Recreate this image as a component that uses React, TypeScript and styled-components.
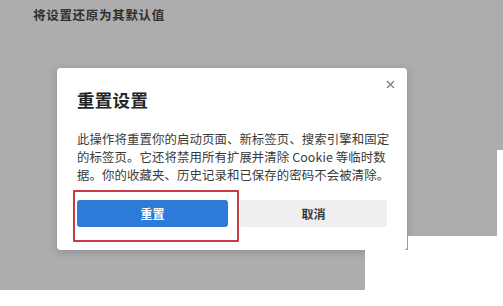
import React from "react";
import styled, { createGlobalStyle } from "styled-components";

const Global = createGlobalStyle`
  html, body { margin: 0; padding: 0; background: #ffffff; }
  body { width: 503px; height: 306px; overflow: hidden; font-family: "Noto Sans CJK SC", "Noto Sans", sans-serif; }
`;

const Page = styled.div`
  position: relative;
  width: 503px;
  height: 306px;
`;

const Backdrop = styled.div`
  width: 503px;
  height: 290px;
  background: #adadad;
  padding: 7px 0 0 0;
  box-sizing: border-box;
  display: flex;
  flex-direction: column;
`;

const Heading = styled.div`
  margin-left: 33px;
  font-size: 12.5px;
  line-height: 16px;
  font-weight: 700;
  color: #2f2f2f;
  letter-spacing: 0.7px;
`;

const Dialog = styled.div`
  position: relative;
  margin: 45px 0 0 57px;
  width: 350px;
  height: 182px;
  box-sizing: border-box;
  background: #ffffff;
  border-radius: 4px;
  box-shadow: 0 2px 8px rgba(0, 0, 0, 0.18);
  padding: 20px 20px 0 20px;
  display: flex;
  flex-direction: column;
`;

const Title = styled.div`
  font-size: 17.5px;
  line-height: 24px;
  font-weight: 700;
  color: #242424;
  letter-spacing: 0.3px;
`;

const Body = styled.div`
  margin-top: 18px;
  display: flex;
  flex-direction: column;
`;

const Line = styled.div`
  font-size: 12.4px;
  line-height: 18px;
  height: 18px;
  color: #3a3a3a;
  white-space: nowrap;
  letter-spacing: 0.1px;
`;

const Actions = styled.div`
  display: grid;
  grid-template-columns: 151px 147px;
  column-gap: 12px;
  margin-top: 16px;
`;

const Button = styled.button<{ $primary?: boolean }>`
  height: 27px;
  border: none;
  border-radius: 3px;
  font-family: inherit;
  font-size: 12px;
  font-weight: 700;
  background: ${(p) => (p.$primary ? "#2c7bd9" : "#efefef")};
  color: ${(p) => (p.$primary ? "#ffffff" : "#3a3a3a")};
  padding: 0;
`;

const Close = styled.div`
  position: absolute;
  right: 12px;
  top: 12px;
  width: 9px;
  height: 9px;
  display: flex;
`;

const Highlight = styled.div`
  position: absolute;
  left: 16px;
  top: 122px;
  width: 166px;
  height: 52px;
  box-sizing: border-box;
  border: 2px solid #c33c42;
  border-radius: 1px;
`;

const Mask = styled.div<{ $l: number; $t: number }>`
  position: absolute;
  left: ${(p) => p.$l}px;
  top: ${(p) => p.$t}px;
  right: 0;
  bottom: 0;
  background: #ffffff;
`;

const lines = [
  "此操作将重置你的启动页面、新标签页、搜索引擎和固定",
  "的标签页。它还将禁用所有扩展并清除 Cookie 等临时数",
  "据。你的收藏夹、历史记录和已保存的密码不会被清除。",
];

export default function App() {
  return (
    <Page>
      <Global />
      <Backdrop>
        <Heading>将设置还原为其默认值</Heading>
        <Dialog>
          <Close>
            <svg width="9" height="9" viewBox="0 0 9 9">
              <path d="M1 1L8 8M8 1L1 8" stroke="#7a7a7a" strokeWidth="1.2" />
            </svg>
          </Close>
          <Title>重置设置</Title>
          <Body>
            {lines.map((l) => (
              <Line key={l}>{l}</Line>
            ))}
          </Body>
          <Actions>
            <Button $primary>重置</Button>
            <Button>取消</Button>
          </Actions>
          <Highlight />
        </Dialog>
      </Backdrop>
      <Mask $l={408} $t={236} />
      <Mask $l={365} $t={250} />
      <Mask $l={497} $t={150} />
    </Page>
  );
}
